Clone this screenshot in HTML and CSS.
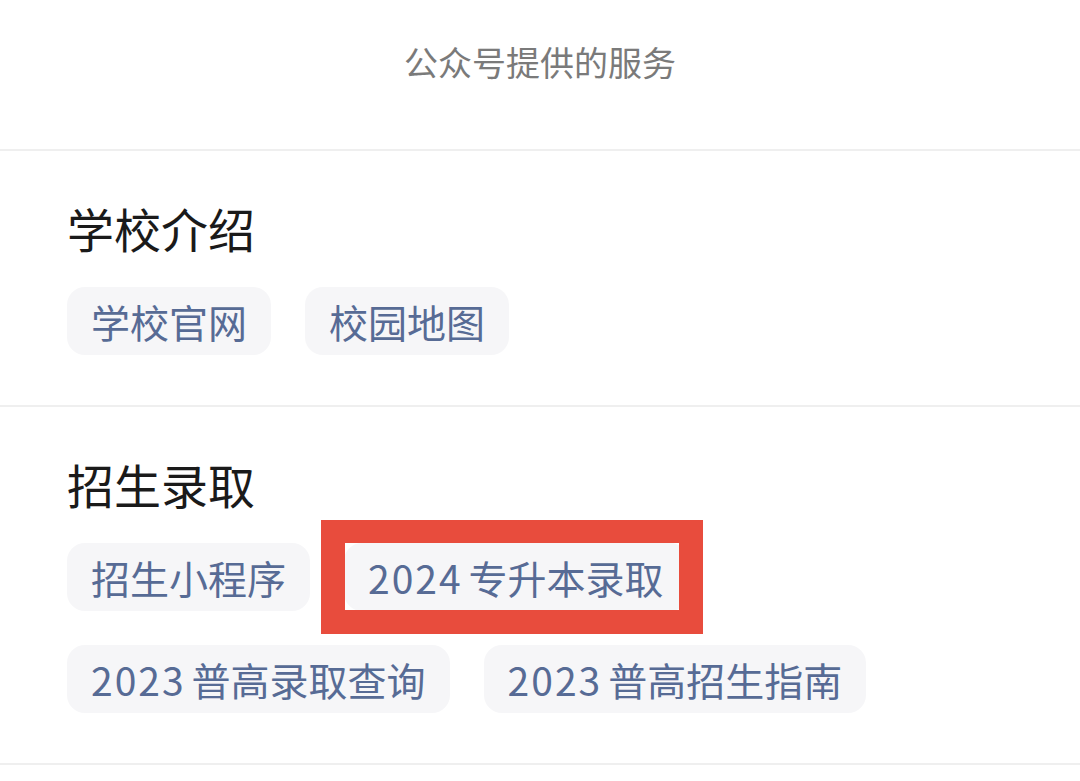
FILE: index.html
```html
<!DOCTYPE html>
<html lang="zh-CN">
<head>
<meta charset="utf-8">
<link rel="stylesheet" href="styles.css">
</head>
<body>
<div class="page">
  <header class="top">公众号提供的服务</header>
  <section class="group">
    <h2 class="group-title">学校介绍</h2>
    <div class="chips">
      <span class="chip">学校官网</span>
      <span class="chip">校园地图</span>
    </div>
  </section>
  <section class="group">
    <h2 class="group-title">招生录取</h2>
    <div class="chips">
      <span class="chip">招生小程序</span>
      <span class="chip chip-marked"><span class="num">2024</span>专升本录取</span>
      <span class="chip"><span class="num">2023</span>普高录取查询</span>
      <span class="chip"><span class="num">2023</span>普高招生指南</span>
    </div>
  </section>
</div>
</body>
</html>
```

FILE: styles.css
```css
*, *::before, *::after { box-sizing: border-box; }
html, body {
  margin: 0;
  padding: 0;
  background: #ffffff;
}
body {
  font-family: "Noto Sans CJK SC", "Noto Sans", sans-serif;
  width: 1080px;
  height: 781px;
  overflow: hidden;
}
.top {
  height: 151px;
  padding-top: 42px;
  line-height: 40px;
  font-size: 34px;
  color: #7a7a7a;
  text-align: center;
  border-bottom: 2px solid #efefef;
}
.group {
  padding: 53px 40px 50px 67px;
  border-bottom: 2px solid #efefef;
}
.group-title {
  margin: 0 0 35px 0;
  font-size: 47px;
  line-height: 48px;
  font-weight: 400;
  color: #1a1a1a;
}
.chips {
  display: flex;
  flex-wrap: wrap;
  gap: 34px;
}
.chip {
  position: relative;
  display: inline-block;
  height: 68px;
  line-height: 68px;
  padding: 0 24px;
  font-size: 39px;
  color: #576b95;
  background: #f6f6f8;
  border-radius: 18px;
  white-space: nowrap;
}
.num {
  letter-spacing: 2px;
  margin-right: 6px;
}
.chip-marked::after {
  content: "";
  position: absolute;
  z-index: 2;
  left: -23px;
  top: -23px;
  width: 382px;
  height: 114px;
  border: 24px solid #e84c3d;
  border-top-width: 23px;
}
```
